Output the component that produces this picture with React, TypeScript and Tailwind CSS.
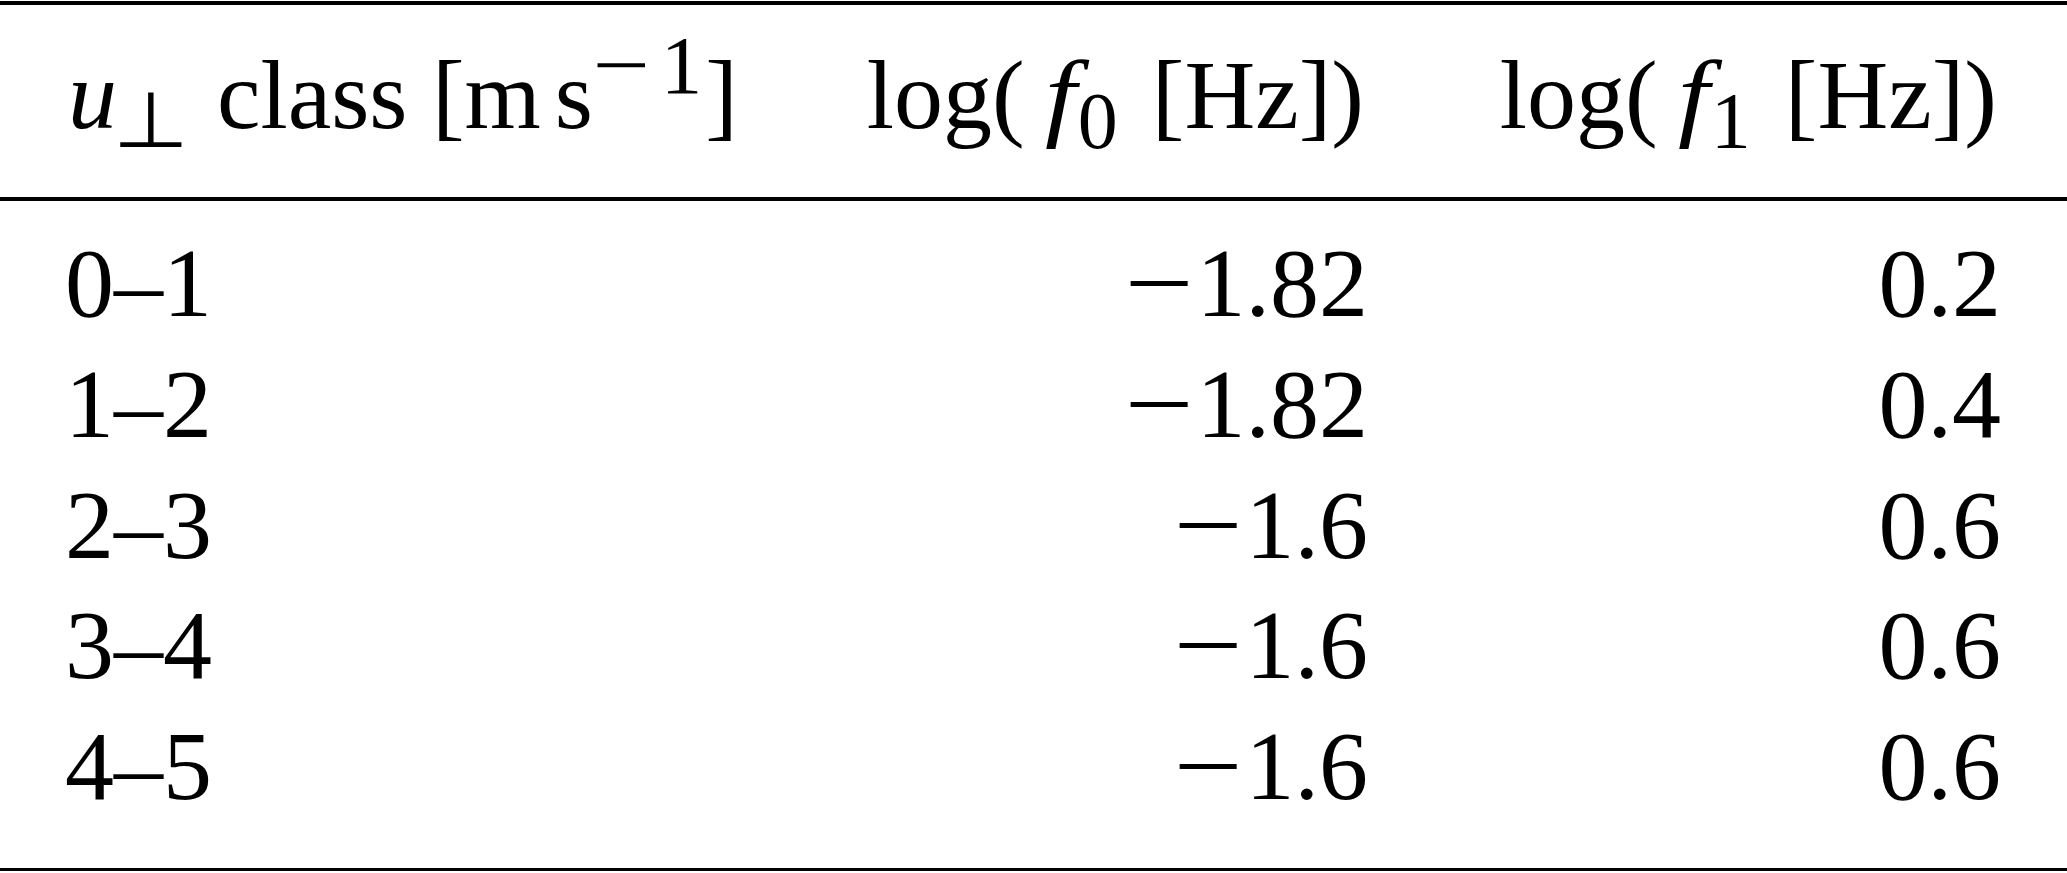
import React from "react";

const rows: [string, string, string][] = [
  ["0–1", "1.82", "0.2"],
  ["1–2", "1.82", "0.4"],
  ["2–3", "1.6", "0.6"],
  ["3–4", "1.6", "0.6"],
  ["4–5", "1.6", "0.6"],
];

function NegNum({ v }: { v: string }) {
  return (
    <span className="whitespace-nowrap">
      <span className="inline-block w-[76px] text-center scale-x-[1.25]">−</span>
      {v}
    </span>
  );
}

function LogHeader({ sub }: { sub: string }) {
  return (
    <span className="whitespace-nowrap">
      log(
      <span className="inline-block italic ml-[22px] scale-x-[1.15]">f</span>
      <span className="relative top-[20px] text-[80px] leading-none ml-[4px]">{sub}</span>
      <span className="ml-[34px]">[Hz])</span>
    </span>
  );
}

export default function App() {
  return (
    <div className="w-[2067px] h-[873px] bg-white text-black overflow-hidden font-['Liberation_Serif','Times_New_Roman',serif] text-[98px]">
      <div className="h-[1px]" />
      <div className="h-[3.5px] bg-black" />
      <div className="grid grid-cols-[735px_568px_633px] pl-[65px] pr-[66px] pt-[30px] pb-[42px] leading-[120px] whitespace-nowrap">
        <div className="text-left">
          <span className="italic ml-[3px]">u</span>
          <span className="relative inline-block top-[19px] text-[78px] leading-none scale-x-[1.12] font-['DejaVu_Sans',sans-serif]">⊥</span>
          <span className="ml-[32px]">class [m</span>
          <span className="ml-[14px]">s</span>
          <span className="relative -top-[35px] text-[83px] leading-none">
            <span className="inline-block ml-[5px] scale-x-[1.23]">−</span>
            <span className="ml-[16px]">1</span>
          </span>
          <span className="ml-[3px]">]</span>
        </div>
        <div className="text-right pr-[4px]">
          <LogHeader sub="0" />
        </div>
        <div className="text-right pr-[4px]">
          <LogHeader sub="1" />
        </div>
      </div>
      <div className="h-[4px] bg-black" />
      <div className="grid grid-cols-[735px_568px_633px] pl-[65px] pr-[66px] pt-[22.6px] pb-[41px] leading-[120.7px] whitespace-nowrap">
        {rows.map((r, i) => (
          <React.Fragment key={i}>
            <div className="text-left">{r[0]}</div>
            <div className="text-right">
              <NegNum v={r[1]} />
            </div>
            <div className="text-right">{r[2]}</div>
          </React.Fragment>
        ))}
      </div>
      <div className="h-[3.5px] bg-black" />
    </div>
  );
}
